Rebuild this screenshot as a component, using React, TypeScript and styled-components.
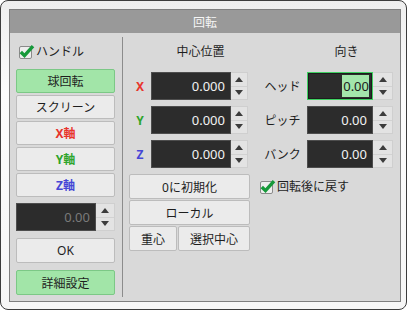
import styled, { createGlobalStyle } from "styled-components";

const GlobalStyle = createGlobalStyle`
  body {
    margin: 0;
    background: #fff;
    font-family: "Noto Sans", "Noto Sans CJK JP", sans-serif;
  }
`;

const Frame = styled.div`
  width: 407px;
  height: 310px;
  box-sizing: border-box;
  border: 1px solid #3c3c3c;
  border-radius: 8px;
  background: linear-gradient(#eeeeee, #fcfcfc 30%, #f6f6f6);
  padding: 8px 5px 7px 8px;
  display: flex;
`;

const Panel = styled.div`
  flex: 1;
  display: flex;
  flex-direction: column;
  border: 1px solid #7e7e7e;
  background: #d9d9d9;
`;

const Title = styled.div`
  height: 23px;
  background: #999999;
  color: #f6f6f6;
  font-size: 12px;
  display: flex;
  align-items: center;
  justify-content: center;
`;

const Body = styled.div`
  flex: 1;
  display: flex;
  padding-left: 6px;
`;

const LeftCol = styled.div`
  width: 99px;
  display: flex;
  flex-direction: column;
  padding-top: 8px;
`;

const Divider = styled.div`
  width: 1px;
  background: #8c8c8c;
  margin: 4px 6px 4px 7px;
`;

const Column = styled.div<{ $w: number; $ml?: number }>`
  width: ${(p) => p.$w}px;
  margin-left: ${(p) => p.$ml ?? 0}px;
  display: flex;
  flex-direction: column;
  padding-top: 7px;
`;

const Header = styled.div<{ $pl: number }>`
  height: 22px;
  font-size: 12px;
  color: #1e1e1e;
  display: flex;
  align-items: center;
  justify-content: center;
  padding-left: ${(p) => p.$pl}px;
  margin-bottom: 10px;
`;

const Rows = styled.div`
  display: flex;
  flex-direction: column;
  gap: 6px;
`;

const Row = styled.div`
  display: flex;
  align-items: center;
  height: 28px;
`;

const Label = styled.div<{ $w: number; $color?: string; $bold?: boolean }>`
  width: ${(p) => p.$w}px;
  font-size: 12px;
  font-weight: ${(p) => (p.$bold ? 700 : 400)};
  color: ${(p) => p.$color ?? "#1e1e1e"};
  text-align: center;
`;

const CheckRow = styled.div<{ $mt?: number; $ml?: number }>`
  display: flex;
  align-items: center;
  gap: 1px;
  height: 20px;
  font-size: 12px;
  color: #1e1e1e;
  margin-top: ${(p) => p.$mt ?? 0}px;
  margin-left: ${(p) => p.$ml ?? 0}px;
  margin-bottom: 8px;
`;

const Btn = styled.div<{ $green?: boolean; $color?: string; $mt?: number; $w?: number; $h?: number }>`
  box-sizing: border-box;
  flex: none;
  height: ${(p) => p.$h ?? 25}px;
  ${(p) => (p.$w ? `width: ${p.$w}px;` : "")}
  margin-top: ${(p) => p.$mt ?? 0}px;
  background: ${(p) => (p.$green ? "#a2e5a8" : "#ebebeb")};
  border: 1px solid ${(p) => (p.$green ? "#7cc886" : "#bcbcbc")};
  border-radius: 2px;
  color: ${(p) => p.$color ?? "#1e1e1e"};
  font-size: 12px;
  font-weight: ${(p) => (p.$color ? 700 : 400)};
  display: flex;
  align-items: center;
  justify-content: center;
`;

const BtnStack = styled.div<{ $gap: number; $mt?: number }>`
  display: flex;
  flex-direction: column;
  gap: ${(p) => p.$gap}px;
  margin-top: ${(p) => p.$mt ?? 0}px;
`;

const BtnPair = styled.div`
  display: flex;
  gap: 1px;
  & > :last-child {
    flex: 1;
  }
`;

const Spin = styled.div<{ $mt?: number }>`
  display: flex;
  height: 28px;
  flex: none;
  margin-top: ${(p) => p.$mt ?? 0}px;
`;

const Field = styled.div<{ $w: number; $dim?: boolean; $focus?: boolean }>`
  box-sizing: border-box;
  width: ${(p) => p.$w}px;
  height: 100%;
  background: #2c2c2c;
  border: 1px solid ${(p) => (p.$focus ? "#3fd061" : "#4d4d4d")};
  box-shadow: ${(p) => (p.$focus ? "inset 0 0 0 1px #1c1c1c" : "none")};
  color: ${(p) => (p.$dim ? "#7a7a7a" : "#f2f2f2")};
  font-size: 13px;
  display: flex;
  align-items: center;
  justify-content: flex-end;
  padding-right: ${(p) => (p.$focus ? 3 : 5)}px;
`;

const Selected = styled.span`
  background: #a3e6ab;
  color: #1b1b1b;
  height: 22px;
  display: flex;
  align-items: center;
  padding-left: 1px;
`;

const Arrows = styled.div<{ $w: number }>`
  box-sizing: border-box;
  width: ${(p) => p.$w}px;
  height: 100%;
  background: #e3e3e3;
  border: 1px solid #cfcfcf;
  border-left: none;
  display: flex;
  flex-direction: column;
`;

const Arrow = styled.div<{ $down?: boolean }>`
  flex: 1;
  display: flex;
  align-items: center;
  justify-content: center;
  border-top: ${(p) => (p.$down ? "1px solid #d2d2d2" : "none")};
  &::after {
    content: "";
    border-left: 4px solid transparent;
    border-right: 4px solid transparent;
    ${(p) => (p.$down ? "border-top" : "border-bottom")}: 5px solid #3c3c3c;
  }
`;

function Check() {
  return (
    <svg width="17" height="17" viewBox="0 0 17 17">
      <rect x="1.5" y="3.5" width="12" height="12" rx="1.5" fill="#eeeeee" stroke="#8a8a8a" />
      <path d="M2.8 9 L6.5 12.6 L15 3.2" fill="none" stroke="#16993a" strokeWidth="3.4" />
    </svg>
  );
}

function SpinBox(props: {
  value: string;
  fw: number;
  aw: number;
  dim?: boolean;
  focus?: boolean;
  mt?: number;
}) {
  return (
    <Spin $mt={props.mt}>
      <Field $w={props.fw} $dim={props.dim} $focus={props.focus}>
        {props.focus ? <Selected>{props.value}</Selected> : props.value}
      </Field>
      <Arrows $w={props.aw}>
        <Arrow />
        <Arrow $down />
      </Arrows>
    </Spin>
  );
}

const axes = [
  { name: "X", color: "#e8342c" },
  { name: "Y", color: "#2fa52c" },
  { name: "Z", color: "#4646d6" },
];

const angles = [
  { name: "ヘッド", focus: true },
  { name: "ピッチ", focus: false },
  { name: "バンク", focus: false },
];

export default function App() {
  return (
    <>
      <GlobalStyle />
      <Frame>
        <Panel>
          <Title>回転</Title>
          <Body>
            <LeftCol>
              <CheckRow $ml={2}>
                <Check />
                ハンドル
              </CheckRow>
              <BtnStack $gap={2}>
                <Btn $green $h={24}>球回転</Btn>
                <Btn $h={24}>スクリーン</Btn>
                {axes.map((a) => (
                  <Btn key={a.name} $h={24} $color={a.color}>
                    {a.name}軸
                  </Btn>
                ))}
              </BtnStack>
              <SpinBox value="0.00" fw={80} aw={19} dim mt={6} />
              <Btn $mt={7}>OK</Btn>
              <Btn $green $mt={7}>
                詳細設定
              </Btn>
            </LeftCol>
            <Divider />
            <Column $w={121}>
              <Header $pl={22}>中心位置</Header>
              <Rows>
                {axes.map((a) => (
                  <Row key={a.name}>
                    <Label $w={22} $color={a.color} $bold>
                      {a.name}
                    </Label>
                    <SpinBox value="0.000" fw={80} aw={17} />
                  </Row>
                ))}
              </Rows>
              <BtnStack $gap={1} $mt={6}>
                <Btn>0に初期化</Btn>
                <Btn>ローカル</Btn>
                <BtnPair>
                  <Btn $w={48}>重心</Btn>
                  <Btn>選択中心</Btn>
                </BtnPair>
              </BtnStack>
            </Column>
            <Column $w={135} $ml={8}>
              <Header $pl={42}>向き</Header>
              <Rows>
                {angles.map((a) => (
                  <Row key={a.name}>
                    <Label $w={49}>{a.name}</Label>
                    <SpinBox value="0.00" fw={66} aw={20} focus={a.focus} />
                  </Row>
                ))}
              </Rows>
              <CheckRow $mt={8} $ml={1}>
                <Check />
                回転後に戻す
              </CheckRow>
            </Column>
          </Body>
        </Panel>
      </Frame>
    </>
  );
}
